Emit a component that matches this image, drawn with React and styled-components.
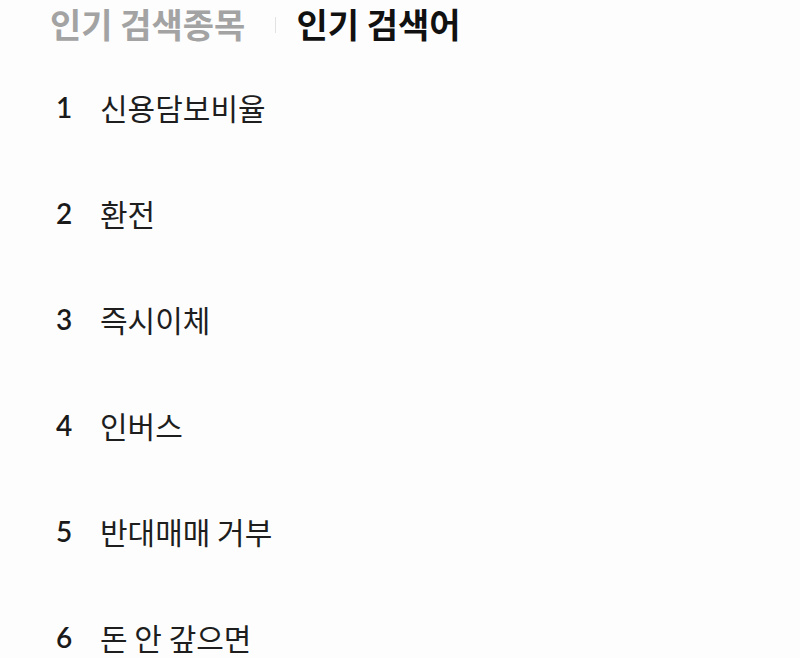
import React from "react"
import styled, { createGlobalStyle } from "styled-components"

const GlobalStyle = createGlobalStyle`
  html, body {
    margin: 0;
    padding: 0;
    background: #fff;
  }
  body {
    font-family: Lato, "Noto Sans CJK KR", sans-serif;
    overflow: hidden;
  }
`

const Page = styled.div`
  width: 800px;
  height: 658px;
  padding-top: 2px;
  box-sizing: border-box;
  background: #fdfdfd;
  overflow: hidden;
`

const Tabs = styled.div`
  display: flex;
  align-items: center;
  height: 44px;
  padding-left: 50px;
`

const Tab = styled.div`
  font-family: "Noto Sans CJK KR", sans-serif;
  font-size: 34px;
  font-weight: 700;
  line-height: 1.4;
  color: ${(p) => (p.$active ? "#111" : "#a3a3a3")};
`

const Divider = styled.span`
  width: 1px;
  height: 16px;
  margin: 2px 20px 0 30px;
  background: #e2e2e2;
`

const List = styled.ol`
  list-style: none;
  margin: 8px 0 0;
  padding: 0 0 0 56px;
`

const Row = styled.li`
  display: flex;
  align-items: center;
  height: 106px;
`

const Rank = styled.span`
  width: 44px;
  font-family: Lato, sans-serif;
  font-size: 28px;
  font-weight: 600;
  color: #1a1a1a;
`

const Keyword = styled.span`
  font-family: "Noto Sans CJK KR", sans-serif;
  font-size: 30px;
  font-weight: 400;
  color: #1e1e1e;
`

const keywords = ["신용담보비율", "환전", "즉시이체", "인버스", "반대매매 거부", "돈 안 갚으면"]

const App = () => (
  <Page>
    <GlobalStyle />
    <Tabs>
      <Tab>인기 검색종목</Tab>
      <Divider />
      <Tab $active>인기 검색어</Tab>
    </Tabs>
    <List>
      {keywords.map((word, i) => (
        <Row key={word}>
          <Rank>{i + 1}</Rank>
          <Keyword>{word}</Keyword>
        </Row>
      ))}
    </List>
  </Page>
)

export default App
